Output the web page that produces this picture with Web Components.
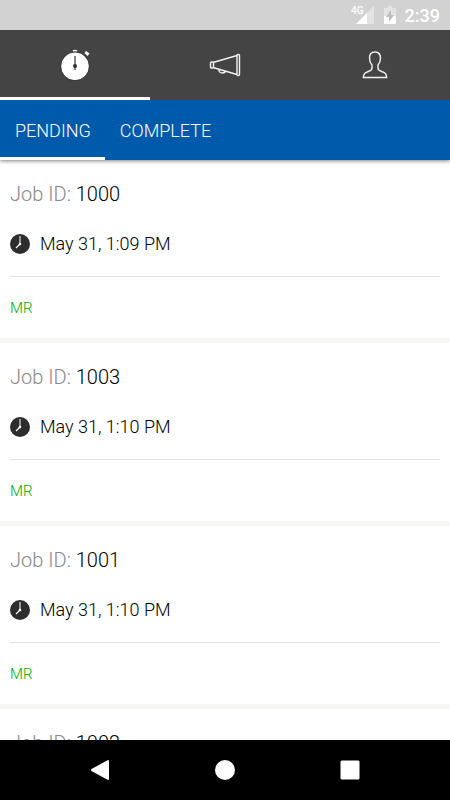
<!DOCTYPE html>
<html lang="en">
<head>
<meta charset="utf-8">
<meta name="viewport" content="width=device-width, initial-scale=1">
<title>Jobs</title>
<style>
  body {
    margin: 0;
    font-family: Roboto, "Liberation Sans", sans-serif;
    background-color: #fff;
  }
</style>
</head>
<body>
<jobs-app>
  <status-bar slot="status" time="2:39" network="4G"></status-bar>
  <main-nav slot="header"></main-nav>
  <tab-bar slot="header">
    <tab-item selected>PENDING</tab-item>
    <tab-item>COMPLETE</tab-item>
  </tab-bar>
  <job-card job="1000" date="May 31, 1:09 PM">MR</job-card>
  <job-card job="1003" date="May 31, 1:10 PM">MR</job-card>
  <job-card job="1001" date="May 31, 1:10 PM">MR</job-card>
  <job-card job="1002"></job-card>
  <system-bar slot="system"></system-bar>
</jobs-app>

<script>
const createTemplate = (html) => {
  const template = document.createElement("template");
  template.innerHTML = html;
  return template;
};

const templateApp = createTemplate(`
  <style>
    :host {
      display: flex;
      flex-direction: column;
      height: 100vh;
    }

    header {
      flex: none;
      z-index: 1;
      box-shadow: 0 1px 4px rgba(0, 0, 0, 0.5);
      clip-path: inset(0 0 -8px);
    }

    main {
      flex: 1;
      min-height: 0;
      overflow-y: auto;
      scrollbar-width: none;
    }
  </style>
  <slot name="status"></slot>
  <header><slot name="header"></slot></header>
  <main><slot></slot></main>
  <slot name="system"></slot>
`);

class JobsApp extends HTMLElement {
  constructor() {
    super();
    this.attachShadow({ mode: "open" });
    this.shadowRoot.appendChild(templateApp.content.cloneNode(true));
  }
}

const templateStatus = createTemplate(`
  <style>
    :host {
      display: flex;
      flex: none;
      justify-content: flex-end;
      height: 30px;
      padding-right: 10px;
      background-color: #d2d2d2;
      color: #fff;
    }

    .network {
      margin-top: 5px;
      font-size: 10px;
      line-height: 12px;
      font-weight: 500;
    }

    svg {
      flex: none;
      align-self: center;
    }

    .signal {
      margin: 0 10px 0 -8px;
    }

    .time {
      margin-left: 9px;
      font-size: 18px;
      line-height: 31px;
      font-weight: 500;
    }
  </style>
  <span class="network"></span>
  <svg class="signal" width="18" height="18" viewBox="0 0 18 18">
    <path d="M18 0v18H0z" fill="#e3e3e3"/>
    <path d="M11 7v11H0z" fill="#fff"/>
  </svg>
  <svg width="12" height="18" viewBox="0 0 12 18">
    <path d="M4 0h4v2h4v16H0V2h4z" fill="#e3e3e3"/>
    <path d="M0 10h12v8H0z" fill="#fff"/>
    <path d="M7 4v5h3l-5 7v-5H2z" fill="#bdbdbd"/>
  </svg>
  <span class="time"></span>
`);

class StatusBar extends HTMLElement {
  constructor() {
    super();
    this.attachShadow({ mode: "open" });
    this.shadowRoot.appendChild(templateStatus.content.cloneNode(true));
    this.shadowRoot.querySelector(".network").innerText = this.getAttribute("network");
    this.shadowRoot.querySelector(".time").innerText = this.getAttribute("time");
  }
}

const templateNav = createTemplate(`
  <style>
    :host {
      display: block;
      background-color: #444;
    }

    nav {
      display: grid;
      grid-template-columns: repeat(3, 1fr);
    }

    button {
      display: flex;
      justify-content: center;
      align-items: center;
      height: 70px;
      padding: 3px 0 0;
      border: 0;
      border-bottom: 3px solid transparent;
      background: none;
      cursor: pointer;
    }

    button[aria-current] {
      border-bottom-color: #fff;
    }
  </style>
  <nav>
    <button aria-label="Jobs" aria-current="page">
      <svg width="32" height="32" viewBox="0 0 32 32">
        <path d="M14 2.200q2-1.400 4 0" fill="none" stroke="#fff" stroke-width="1.600"/>
        <circle cx="16" cy="17.300" r="14" fill="#fff"/>
        <circle cx="16" cy="17.300" r="14.300" fill="none" stroke="#292929" stroke-width="0.700"/>
        <path d="M25.500 4l1.500-2 3.500 2.500-2 2.500z" fill="#fff"/>
        <path d="M16 7v14" stroke="#555" stroke-width="1.400"/>
        <circle cx="16" cy="17" r="2" fill="#333"/>
      </svg>
    </button>
    <button aria-label="Announcements">
      <svg width="32" height="26" viewBox="0 0 32 26" fill="none" stroke="#f2f2f2" stroke-width="1.400">
        <path d="M4 10.500L28 3.500M4 15.500l24 7M10 17.500v1.500q1 2 3.500 2t3-2"/>
        <rect x="1.500" y="10" width="3" height="6" rx="1"/>
        <rect x="28" y="2.500" width="2.500" height="21" rx="1"/>
      </svg>
    </button>
    <button aria-label="Profile">
      <svg width="26" height="28" viewBox="0 0 26 28" fill="none" stroke="#f2f2f2" stroke-width="1.400">
        <path d="M13 1C9.500 1 7.500 3.500 7.500 7c0 3 .8 5 2.500 7v3c0 2-1 2.500-3 3.200-3.500 1.300-5.500 2-5.700 6.300h23.400c-.2-4.300-2.200-5-5.700-6.300-2-.7-3-1.200-3-3.200v-3c1.700-2 2.500-4 2.500-7 0-3.500-2-6-5.500-6z"/>
      </svg>
    </button>
  </nav>
`);

class MainNav extends HTMLElement {
  constructor() {
    super();
    this.attachShadow({ mode: "open" });
    this.shadowRoot.appendChild(templateNav.content.cloneNode(true));
  }
}

const templateTabs = createTemplate(`
  <style>
    :host {
      display: flex;
      height: 60px;
      background-color: #005aab;
      color: #fff;
    }
  </style>
  <slot></slot>
`);

class TabBar extends HTMLElement {
  constructor() {
    super();
    this.attachShadow({ mode: "open" });
    this.shadowRoot.appendChild(templateTabs.content.cloneNode(true));
    this.selectTab = this.selectTab.bind(this);
  }

  selectTab(event) {
    const selected = event.target.closest("tab-item");
    if (!selected) return;
    this.querySelectorAll("tab-item").forEach((tab) => {
      tab.toggleAttribute("selected", tab === selected);
    });
  }

  connectedCallback() {
    this.addEventListener("click", this.selectTab);
  }

  disconnectedCallback() {
    this.removeEventListener("click", this.selectTab);
  }
}

const templateTab = createTemplate(`
  <style>
    :host {
      display: flex;
    }

    button {
      padding: 3px 14px 0 15px;
      border: 0;
      border-bottom: 3px solid transparent;
      background: none;
      color: inherit;
      font-family: inherit;
      font-size: 18px;
      font-weight: 300;
      cursor: pointer;
    }

    :host([selected]) button {
      border-bottom-color: #fff;
    }
  </style>
  <button><slot></slot></button>
`);

class TabItem extends HTMLElement {
  constructor() {
    super();
    this.attachShadow({ mode: "open" });
    this.shadowRoot.appendChild(templateTab.content.cloneNode(true));
  }
}

const templateJob = createTemplate(`
  <style>
    :host {
      display: block;
      padding: 22px 10px 20px;
      border-bottom: 5px solid #f7f7f3;
      background-color: #fff;
      color: #000;
      font-weight: 300;
    }

    h2 {
      margin: 0;
      font-size: 20px;
      line-height: 24px;
      font-weight: 300;
    }

    .label {
      color: #888;
    }

    .date {
      display: flex;
      align-items: center;
      gap: 10px;
      margin: 28px 0 22px;
      font-size: 18px;
      line-height: 20px;
    }

    .code {
      padding-top: 21px;
      border-top: 1px solid #e2e2e2;
      color: #00aa00;
      font-size: 15px;
      line-height: 20px;
    }
  </style>
  <h2><span class="label">Job ID:</span> <span class="job"></span></h2>
  <div class="date">
    <svg width="20" height="20" viewBox="0 0 20 20">
      <circle cx="10" cy="10" r="10" fill="#2d2d2d"/>
      <path d="M10 2v8" stroke="#bbb" stroke-width="1.500"/>
      <path d="M10 10l-4 4" stroke="#fff" stroke-width="1.200"/>
      <circle cx="10" cy="10" r="1.300" fill="#fff"/>
    </svg>
    <time></time>
  </div>
  <div class="code"><slot></slot></div>
`);

class JobCard extends HTMLElement {
  constructor() {
    super();
    this.attachShadow({ mode: "open" });
    this.shadowRoot.appendChild(templateJob.content.cloneNode(true));
    this.shadowRoot.querySelector(".job").innerText = this.getAttribute("job");
    this.shadowRoot.querySelector("time").innerText = this.getAttribute("date") || "";
  }
}

const templateSystem = createTemplate(`
  <style>
    :host {
      display: flex;
      flex: none;
      justify-content: center;
      height: 60px;
      background-color: #000;
    }

    button {
      display: flex;
      justify-content: center;
      align-items: center;
      width: 125px;
      padding: 0;
      border: 0;
      background: none;
    }
  </style>
  <button aria-label="Back">
    <svg width="20" height="20" viewBox="0 0 20 20" fill="#fff">
      <path d="M18 0q1 0 1 1v18q0 1-1 1L1.500 11q-1-1 0-2z"/>
    </svg>
  </button>
  <button aria-label="Home">
    <svg width="20" height="20" viewBox="0 0 20 20" fill="#fff">
      <circle cx="10" cy="10" r="10"/>
    </svg>
  </button>
  <button aria-label="Recent apps">
    <svg width="20" height="20" viewBox="0 0 20 20" fill="#fff">
      <rect x="0.500" y="0.500" width="19" height="19" rx="1.500"/>
    </svg>
  </button>
`);

class SystemBar extends HTMLElement {
  constructor() {
    super();
    this.attachShadow({ mode: "open" });
    this.shadowRoot.appendChild(templateSystem.content.cloneNode(true));
  }
}

window.customElements.define("jobs-app", JobsApp);
window.customElements.define("status-bar", StatusBar);
window.customElements.define("main-nav", MainNav);
window.customElements.define("tab-bar", TabBar);
window.customElements.define("tab-item", TabItem);
window.customElements.define("job-card", JobCard);
window.customElements.define("system-bar", SystemBar);
</script>
</body>
</html>
